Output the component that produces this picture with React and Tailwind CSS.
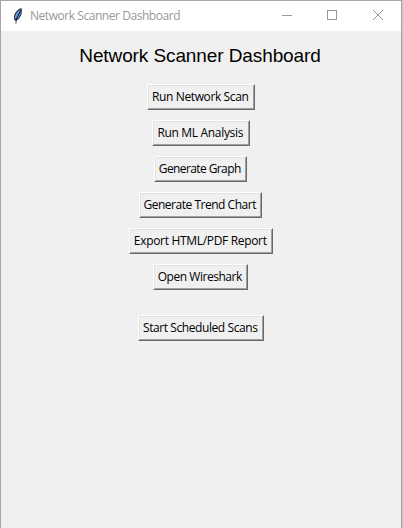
const actions = [
  { label: "Run Network Scan", box: "w-[108px]", text: "tracking-[-0.38px]" },
  { label: "Run ML Analysis", box: "w-[98px]", text: "tracking-[-0.32px]" },
  { label: "Generate Graph", box: "mr-px w-[93px]", text: "tracking-[-0.6px]" },
  { label: "Generate Trend Chart", box: "mr-px w-[123px]", text: "tracking-[-0.48px]" },
  { label: "Export HTML/PDF Report", box: "w-[144px]", text: "tracking-[-0.32px]" },
  { label: "Open Wireshark", box: "mr-px w-[95px]", text: "tracking-[-0.47px]" },
];

function TkButton({ label, box, text }) {
  return (
    <button
      className={`h-[26px] border border-t-white border-l-white border-r-[#696969] border-b-[#696969] bg-[#f0f0f0] ${box}`}
    >
      <span className="flex h-full items-center justify-center border border-t-[#e3e3e3] border-l-[#e3e3e3] border-r-[#a0a0a0] border-b-[#a0a0a0] pr-[1.5px]">
        <span className={`whitespace-nowrap text-[12px] leading-[16px] text-black ${text}`}>{label}</span>
      </span>
    </button>
  );
}

function Feather() {
  return (
    <svg width="16" height="16" viewBox="0 0 16 16">
      <path d="M11.5 0 C8.2 0.8 4.6 4.4 4 8.4 L4.2 11.4 L5.8 13 L8.6 11 C11.4 8 12.6 4 11.5 0Z" fill="#1b2432" />
      <path d="M10.8 1 C8.2 2.6 5.6 5.4 5 8.6 L5.1 11 L6 11.2 L8 8 Z" fill="#6ba3ea" />
      <path d="M11.2 2.4 C11.2 5.6 9.8 8.8 7.4 10.8 L6.9 10.8 Z" fill="#4c84cc" />
      <path d="M10.4 2.6 L6.4 10.4 L5.9 15.6" fill="none" stroke="#10151d" strokeWidth="0.8" />
    </svg>
  );
}

export default function App() {
  return (
    <div className="flex h-[528px] w-[403px] flex-col border-t border-l border-r border-t-[#a6a6a6] border-l-[#a6a6a6] border-r-[#c9c9c9] font-['Open_Sans','Noto_Sans',sans-serif]">
      <div className="flex min-h-0 flex-1 flex-col border-r border-[#a3a3a3] bg-[#f0f0f0]">
        <header className="flex h-[30px] shrink-0 items-center bg-white pl-[9px] text-[#999999]">
          <Feather />
          <span className="ml-1 whitespace-nowrap text-[12px] leading-[16px] tracking-[-0.45px]">Network Scanner Dashboard</span>
          <svg className="ml-auto shrink-0" width="135" height="30" viewBox="0 0 135 30" fill="none" stroke="#999999" shapeRendering="crispEdges">
            <path d="M16 14.5H26" />
            <path d="M61.5 9.5H70.5V18.5H61.5Z" />
            <path d="M107 9L117 19M117 9L107 19" shapeRendering="auto" />
          </svg>
        </header>
        <main className="flex flex-col items-center">
          <h1 className="mt-[13px] mr-[2px] mb-[16px] h-6 whitespace-nowrap font-['Liberation_Sans',Arial,sans-serif] text-[19px] leading-6 tracking-[-0.1px] text-black">
            Network Scanner Dashboard
          </h1>
          <div className="flex flex-col items-center gap-[10px]">
            {actions.map((a) => (
              <TkButton key={a.label} {...a} />
            ))}
          </div>
          <div className="mt-[24px]">
            <TkButton label="Start Scheduled Scans" box="w-[126px]" text="tracking-[-0.42px]" />
          </div>
        </main>
      </div>
    </div>
  );
}
